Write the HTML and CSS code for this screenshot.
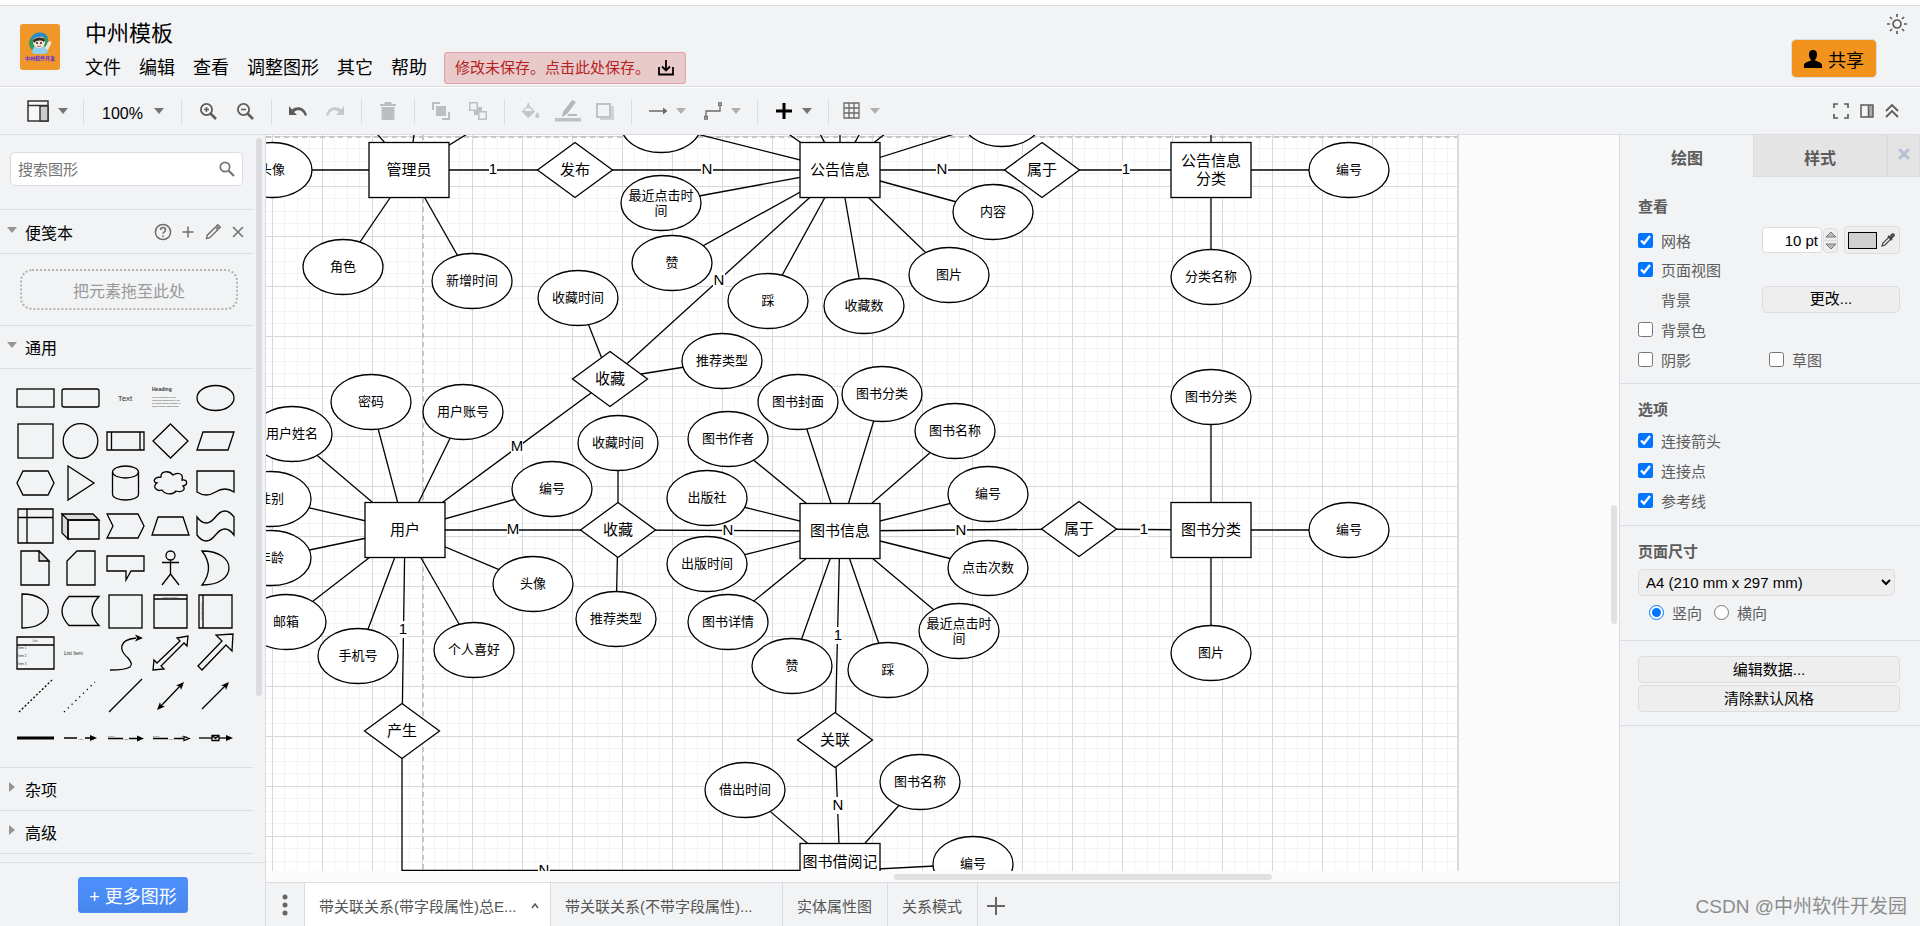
FILE: index.html
```html
<!DOCTYPE html>
<html lang="zh-CN">
<head>
<meta charset="utf-8">
<title>中州模板</title>
<link rel="stylesheet" href="styles.css">
</head>
<body>
<svg class="defs" width="0" height="0" aria-hidden="true">
  <symbol id="caret" viewBox="0 0 10 6"><path d="M0 0h10L5 6z" fill="currentColor"/></symbol>
</svg>

<header class="header">
  <svg class="logo" viewBox="0 0 40 46" role="img" aria-label="logo">
    <rect width="40" height="46" rx="3" fill="#f0972a"/>
    <circle cx="19" cy="19" r="10" fill="#2f9a63"/>
    <path d="M12 28c1-6 4-7 8-7s7 2 8 7l-3 2H14z" fill="#8fd0ee"/>
    <path d="M28 18c2-2 4-1 3 2l-3 6-3-2z" fill="#f7e3d2"/>
    <circle cx="19" cy="18" r="6" fill="#fbe6d6"/>
    <path d="M11 16c0-9 15-10 17-2-5-2-11-2-17 2z" fill="#2d8ac7"/>
    <path d="M13 17c1-4 10-5 12-1l-1 2c-3-2-7-2-10 1z" fill="#3a2a24"/>
    <circle cx="17" cy="19" r="1" fill="#222"/><circle cx="21" cy="19" r="1" fill="#222"/>
    <path d="M17 22q2 1 4 0" stroke="#a33" fill="none" stroke-width=".8"/>
    <text x="20" y="36" class="logo-text">中州软件开发</text>
  </svg>
  <div class="head-main">
    <h1 class="title">中州模板</h1>
    <nav class="menu">
      <button>文件</button><button>编辑</button><button>查看</button><button>调整图形</button><button>其它</button><button>帮助</button>
      <button class="status">修改未保存。点击此处保存。
        <svg width="16" height="16" viewBox="0 0 16 16" fill="none" stroke="#000" stroke-width="1.8"><path d="M1 7v7.500h14V7M8 0v10M4 6.500l4 4 4-4"/></svg>
      </button>
    </nav>
  </div>
  <div class="head-side">
    <button class="theme" aria-label="外观">
      <svg width="22" height="22" viewBox="0 0 22 22" fill="none" stroke="#5c5c5c" stroke-width="1.700"><circle cx="11" cy="11" r="4"/><path d="M11 1v3M11 18v3M1 11h3M18 11h3M4 4l2 2M16 16l2 2M4 18l2-2M16 6l2-2"/></svg>
    </button>
    <button class="share">
      <svg width="18" height="18" viewBox="0 0 18 18"><path d="M9 0c3 0 4 2 4 4.500 0 2-.8 4-1.800 5v1.300c3 1 6.800 1.700 6.800 4.700V18H0v-2.500c0-3 3.800-3.700 6.800-4.700V9.500C5.800 8.500 5 6.500 5 4.500 5 2 6 0 9 0z"/></svg>
      共享
    </button>
  </div>
</header>

<div class="toolbar">
  <button class="tb-view" aria-label="视图">
    <svg width="22" height="22" viewBox="0 0 22 22"><rect x="1" y="1" width="20" height="20" fill="#f7f7f7" stroke="#333" stroke-width="1.500"/><path d="M13 6h8v15h-8z" fill="#ccc" stroke="#333" stroke-width="1.500"/><path d="M1 5.500h20" stroke="#333" stroke-width="1.500"/></svg>
    <svg class="caret"><use href="#caret"/></svg>
  </button>
  <span class="sep"></span>
  <button class="tb-zoom">100%<svg class="caret"><use href="#caret"/></svg></button>
  <span class="sep"></span>
  <button class="tb" aria-label="放大"><svg viewBox="0 0 18 18" fill="none" stroke="#5c5c5c" stroke-width="1.800"><circle cx="7.500" cy="7.500" r="5.600"/><path d="M11.500 11.500l5.500 5.500" stroke-width="2.500"/><path d="M7.500 5v5M5 7.500h5" stroke-width="1.500"/></svg></button>
  <button class="tb" aria-label="缩小"><svg viewBox="0 0 18 18" fill="none" stroke="#5c5c5c" stroke-width="1.800"><circle cx="7.500" cy="7.500" r="5.600"/><path d="M11.500 11.500l5.500 5.500" stroke-width="2.500"/><path d="M5 7.500h5" stroke-width="1.500"/></svg></button>
  <span class="sep"></span>
  <button class="tb" aria-label="撤销"><svg viewBox="0 0 18 18"><path d="M0 4v9h8L5 10c4-3.500 9-2 11 4l2-1C16 5 8 3 3 7.500z" fill="#5c5c5c"/></svg></button>
  <button class="tb" aria-label="重做"><svg viewBox="0 0 18 18"><path d="M18 4v9h-8l3-3C9 6.500 4 8 2 14l-2-1C2 5 10 3 15 7.500z" fill="#c6c8c9"/></svg></button>
  <span class="sep"></span>
  <button class="tb" aria-label="删除"><svg viewBox="0 0 18 18" fill="#bcbebf"><path d="M1 2h4l1-2h6l1 2h4v2H1zM2.500 5h13v11.500q0 1.500-1.500 1.500H4q-1.500 0-1.500-1.500z"/></svg></button>
  <span class="sep"></span>
  <button class="tb" aria-label="置于前面"><svg viewBox="0 0 18 18" fill="#bcbebf"><path d="M4 4h10v10H4z"/><path d="M0 0h8v2H2v6H0zM18 18h-8v-2h6v-6h2z"/></svg></button>
  <button class="tb" aria-label="置于后面"><svg viewBox="0 0 18 18" fill="#bcbebf"><path d="M5 5h8v8H5z"/><path d="M.750.750h7.500v7.500H.750zM9.750 9.750h7.500v7.500h-7.500z" fill="#f1f3f4" stroke="#bcbebf" stroke-width="1.500"/></svg></button>
  <span class="sep"></span>
  <button class="tb" aria-label="填充颜色"><svg viewBox="0 0 20 18"><path d="M7 3l6.500 6.500L7 16 .500 9.500z" fill="none" stroke="#c3c5c6" stroke-width="1.500"/><path d="M1 9h12.500L7 16zM6 0h2v6H6zM17 10q3 4 2 6-2 2-4 0-1-2 2-6z" fill="#c3c5c6"/></svg></button>
  <button class="tb" aria-label="线条颜色"><svg class="wide" viewBox="0 0 26 22"><path d="M7 17l1-5L17 0l4 2-9 12zM14 14h8v2h-10z" fill="#b4b6b7"/><path d="M0 18h26v3.500H0z" fill="#bfc1c2"/></svg></button>
  <button class="tb" aria-label="阴影"><svg viewBox="0 0 18 18"><path d="M4 4h14v14H4z" fill="#d0d2d3"/><rect x="1" y="2" width="13" height="13" fill="#f1f3f4" stroke="#bfc1c2" stroke-width="2"/></svg></button>
  <span class="sep"></span>
  <button class="split dim" aria-label="连接"><svg viewBox="0 0 18 18"><path d="M0 8.300h14V5.500l4.500 3.500-4.500 3.500V9.700H0z" fill="#6b6b6b"/></svg><svg class="caret"><use href="#caret"/></svg></button>
  <button class="split dim" aria-label="航点"><svg viewBox="0 0 18 18" fill="none" stroke="#6b6b6b" stroke-width="1.300"><path d="M2 14V9h14V4M.700 14.500h2.600v2.600H.700zM14.700.800h2.600v2.600h-2.600z"/></svg><svg class="caret"><use href="#caret"/></svg></button>
  <span class="sep"></span>
  <button class="split" aria-label="插入"><svg viewBox="0 0 18 18"><path d="M7.500 1h3v6.500H17v3h-6.500V17h-3v-6.500H1v-3h6.500z"/></svg><svg class="caret"><use href="#caret"/></svg></button>
  <span class="sep"></span>
  <button class="split dim grid-btn" aria-label="表格"><svg viewBox="0 0 18 18" fill="none" stroke="#6b6b6b" stroke-width="1.300"><path d="M1 1h15v15H1zM6 1v15M11 1v15M1 6h15M1 11h15"/></svg><svg class="caret"><use href="#caret"/></svg></button>
  <div class="tb-right">
    <button aria-label="全屏"><svg width="16" height="16" viewBox="0 0 16 16" fill="none" stroke="#5c5c5c" stroke-width="1.700"><path d="M1 5V1h4M11 1h4v4M15 11v4h-4M5 15H1v-4"/></svg></button>
    <button aria-label="格式"><svg width="14" height="14" viewBox="0 0 14 14"><path d="M8.500 1h4.500v12H8.500z" fill="#aaa"/><path d="M1 1h12v12H1zM8.500 1v12" fill="none" stroke="#5c5c5c" stroke-width="1.500"/></svg></button>
    <button aria-label="折叠"><svg width="14" height="14" viewBox="0 0 14 14" fill="none" stroke="#5c5c5c" stroke-width="1.800"><path d="M1 7l6-6 6 6M1 13l6-6 6 6"/></svg></button>
  </div>
</div>

<div class="work">
  <aside class="side">
    <div class="side-scroll">
      <div class="side-body">
        <div class="search">
          <input type="text" placeholder="搜索图形" aria-label="搜索图形">
          <svg width="16" height="16" viewBox="0 0 16 16" fill="none" stroke="#757575" stroke-width="1.700"><circle cx="6" cy="6" r="4.700"/><path d="M9.500 9.500l5.500 5.500" stroke-width="2.200"/></svg>
        </div>
        <div class="sec-head tall">
          <svg class="caret"><use href="#caret"/></svg><span>便笺本</span>
          <div class="sec-tools">
            <button aria-label="帮助"><svg viewBox="0 0 18 18" fill="none" stroke="#6f6f6f" stroke-width="1.500"><circle cx="9" cy="9" r="7.600"/><path d="M6.500 7q0-2.500 2.500-2.500T11.500 7c0 1.800-2.500 1.800-2.500 3.800M9 12.200V14"/></svg></button>
            <button aria-label="添加"><svg viewBox="0 0 18 18" fill="none" stroke="#6f6f6f" stroke-width="1.500"><path d="M9 3.500v11M3.500 9h11"/></svg></button>
            <button aria-label="编辑"><svg viewBox="0 0 18 18" fill="none" stroke="#6f6f6f" stroke-width="1.400"><path d="M2.500 15.500l.8-3.300 8-8 2.500 2.500-8 8zM12.500 3l1.300-1.300 2.500 2.500L15 5.500z"/></svg></button>
            <button aria-label="关闭"><svg viewBox="0 0 18 18" fill="none" stroke="#6f6f6f" stroke-width="1.500"><path d="M4 4l10 10M14 4L4 14"/></svg></button>
          </div>
        </div>
        <div class="scratch"><div class="drop">把元素拖至此处</div></div>
        <div class="sec-head"><svg class="caret"><use href="#caret"/></svg><span>通用</span></div>
        <div class="shapes">
          <svg viewBox="0 0 45 42"><rect x="4" y="12" width="37" height="18"/></svg>
          <svg viewBox="0 0 45 42"><rect x="4" y="12" width="37" height="18" rx="2"/></svg>
          <svg viewBox="0 0 45 42"><text x="22" y="24" class="t8 mid">Text</text></svg>
          <svg viewBox="0 0 45 42"><text x="4" y="14" class="t5">Heading</text><text x="4" y="21" class="t2">Lorem ipsum dolor sit amet,</text><text x="4" y="24" class="t2">consectetur adipisicing elit, sed</text><text x="4" y="27" class="t2">do eiusmod tempor incididunt ut</text><text x="4" y="30" class="t2">labore et dolore magna aliqua.</text></svg>
          <svg viewBox="0 0 45 42"><ellipse cx="22.500" cy="21" rx="18.500" ry="12.500"/></svg>

          <svg viewBox="0 0 45 42"><rect x="5" y="4" width="35" height="34"/></svg>
          <svg viewBox="0 0 45 42"><circle cx="22.500" cy="21" r="17.300"/></svg>
          <svg viewBox="0 0 45 42"><path d="M4 12h37v18H4zM8.500 12v18M37 12v18"/></svg>
          <svg viewBox="0 0 45 42"><path d="M22.500 4L40 21 22.500 38 5 21z"/></svg>
          <svg viewBox="0 0 45 42"><path d="M10 12h31l-6 18H4z"/></svg>

          <svg viewBox="0 0 45 42"><path d="M10 9h25l6 12-6 12H10L4 21z"/></svg>
          <svg viewBox="0 0 45 42"><path d="M10 4l26 17-26 17z"/></svg>
          <svg viewBox="0 0 45 42"><ellipse cx="22.500" cy="10" rx="13" ry="6"/><path d="M9.500 10v22c0 8 26 8 26 0V10"/></svg>
          <svg viewBox="0 0 45 42"><path d="M13 15c-7 0-9 5-4 6-5 3-1 9 5 7 3 5 11 5 14 1 7 2 10-2 7-5 5-1 5-7-1-6 2-7-5-8-9-5-4-5-13-4-12 2z"/></svg>
          <svg viewBox="0 0 45 42"><path d="M4 9h37v21q-9-6-18.500 0T4 30z"/></svg>

          <svg viewBox="0 0 45 42"><path d="M5 4h35v34H5zM14 4v34M5 12.500h35"/></svg>
          <svg viewBox="0 0 45 42"><path d="M4 9h31l6 6H10zM4 9v19l6 6V15z" fill="#d8dadb"/><path d="M10 15h31v19H10z"/></svg>
          <svg viewBox="0 0 45 42"><path d="M4 9h31l6 12-6 12H4l6-12z"/></svg>
          <svg viewBox="0 0 45 42"><path d="M10 12h25l6 18H4z"/></svg>
          <svg viewBox="0 0 45 42"><path d="M4 12q9 12 18.500 0T41 12v18q-9-12-18.500 0T4 30z"/></svg>

          <svg viewBox="0 0 45 42"><path d="M8 4h18l10 10v24H8z"/><path d="M26 4v10h10z" fill="#d8dadb"/></svg>
          <svg viewBox="0 0 45 42"><path d="M19 4h18v34H9V14z"/></svg>
          <svg viewBox="0 0 45 42"><path d="M4 9h37v15H28l-5 9v-9H4z"/></svg>
          <svg viewBox="0 0 45 42"><circle cx="22.500" cy="8.500" r="4.500"/><path d="M22.500 13v14M14 15.500h17M22.500 27L14 38M22.500 27L31 38"/></svg>
          <svg viewBox="0 0 45 42"><path d="M9 4c36 0 36 34 0 34q13-17 0-34z"/></svg>

          <svg viewBox="0 0 45 42"><path d="M9 4c35 0 35 34 0 34z"/></svg>
          <svg viewBox="0 0 45 42"><path d="M11 6.500h30q-14 14.500 0 29H11q-14-14.500 0-29z"/></svg>
          <svg viewBox="0 0 45 42"><rect x="6" y="5" width="33" height="33"/></svg>
          <svg viewBox="0 0 45 42"><path d="M6 5h33v33H6zM6 9h33"/><text x="22" y="8" class="t2 mid">Vertical Container</text></svg>
          <svg viewBox="0 0 45 42"><path d="M6 5h33v33H6zM10 5v33"/><text x="-21" y="9" class="t2 mid" transform="rotate(-90)">Horizontal Container</text></svg>

          <svg viewBox="0 0 45 42"><path d="M4 5h37v32H4zM4 13h37"/><text x="22" y="10" class="t3 mid">List</text><text x="5" y="17" class="t3">Item 1</text><text x="5" y="25" class="t3">Item 2</text><text x="5" y="33" class="t3">Item 3</text></svg>
          <svg viewBox="0 0 45 42"><text x="6" y="23" class="t5 plain">List Item</text></svg>
          <svg viewBox="0 0 45 42"><path d="M7 38c22 0 25-4 18-12-9-8-10-18 8-20"/><path d="M32 2.500l8 3.500-8 3.500 2-3.500z" class="solid"/></svg>
          <svg viewBox="0 0 45 42"><path d="M5 38l1-10 3 3L32 9l-3-3 11-2-1 10-3-3L13 34l3 3z"/></svg>
          <svg viewBox="0 0 45 42"><path d="M5 34l24-25-6-6 17-1-1 17-6-6L9 38z"/></svg>

          <svg viewBox="0 0 45 42"><path d="M6 37L39 5" stroke-dasharray="2 2"/></svg>
          <svg viewBox="0 0 45 42"><path d="M6 37L37 7" stroke-dasharray="1.300 4"/></svg>
          <svg viewBox="0 0 45 42"><path d="M6 37L39 4"/></svg>
          <svg viewBox="0 0 45 42"><path d="M12 32L33 10"/><path d="M36 7l-3 8-1-3.500-4-1zM9 35l3-8 1 3.500 4 1z" class="solid"/></svg>
          <svg viewBox="0 0 45 42"><path d="M9 34L33 10"/><path d="M36 7l-3 8-1-3.500-4-1z" class="solid"/></svg>

          <svg viewBox="0 0 45 42"><path d="M4 21h37" stroke-width="3"/></svg>
          <svg viewBox="0 0 45 42"><path d="M6 21h13M27 21h8"/><path d="M32 18l7 3-7 3z" class="solid"/><text x="23" y="23" class="t2 mid">Label</text></svg>
          <svg viewBox="0 0 45 42"><path d="M5 21.500h15M26 21.500h8"/><path d="M34 18.500l7 3-7 3z" class="solid"/><text x="5" y="20" class="t2">Source</text><text x="23" y="23" class="t2 mid">Label</text></svg>
          <svg viewBox="0 0 45 42"><path d="M5 21.500h15M26 21.500h10"/><path d="M36 19.500l5 2-5 2z"/><text x="5" y="20" class="t2">Source</text><text x="23" y="23" class="t2 mid">Label</text><text x="33" y="20" class="t2">Target</text></svg>
          <svg viewBox="0 0 45 42"><path d="M6 21h30"/><path d="M33 18l7 3-7 3z" class="solid"/><path d="M19 18.500h7v5h-7zM19 18.500l3.500 3 3.500-3" fill="#f1f3f4"/></svg>
        </div>
        <div class="sec-head shut"><svg class="caret"><use href="#caret"/></svg><span>杂项</span></div>
        <div class="sec-head shut"><svg class="caret"><use href="#caret"/></svg><span>高级</span></div>
      </div>
      <div class="side-bar"><div class="thumb"></div></div>
    </div>
    <div class="side-foot"><button class="more">+ 更多图形</button></div>
  </aside>

  <main class="center">
    <div class="canvas-row">
      <svg class="canvas" id="canvas" role="img" aria-label="ER 图"></svg>
      <div class="vbar"><div class="thumb"></div></div>
    </div>
    <div class="hbar"><div class="thumb"></div></div>
    <div class="pages">
      <button class="dots" aria-label="页面"><svg width="6" height="22" viewBox="0 0 6 22" fill="#666"><circle cx="3" cy="3" r="2.500"/><circle cx="3" cy="11" r="2.500"/><circle cx="3" cy="19" r="2.500"/></svg></button>
      <button class="page on">带关联关系(带字段属性)总E...<svg width="8" height="6" viewBox="0 0 8 6" fill="none" stroke="#555" stroke-width="1.500"><path d="M1 5l3-4 3 4"/></svg></button>
      <button class="page second">带关联关系(不带字段属性)...</button>
      <button class="page">实体属性图</button>
      <button class="page">关系模式</button>
      <button class="add" aria-label="插入页面"><svg width="18" height="18" viewBox="0 0 18 18" stroke="#666" stroke-width="2"><path d="M9 0v18M0 9h18"/></svg></button>
    </div>
  </main>

  <aside class="format">
    <div class="tabs">
      <button class="tab on">绘图</button><button class="tab">样式</button>
      <button class="tab-x" aria-label="关闭"><svg width="12" height="12" viewBox="0 0 12 12" stroke="#b3c3d4" stroke-width="3"><path d="M1 1l10 10M11 1L1 11"/></svg></button>
    </div>
    <section class="panel view">
      <h2>查看</h2>
      <div class="line grid-line">
        <label><input type="checkbox" checked>网格</label>
        <div class="ctl">
          <input class="num" type="text" value="10 pt" aria-label="网格大小">
          <div class="spin">
            <button aria-label="增加"><svg width="12" height="7" viewBox="0 0 12 7"><path d="M1 6h10L6 1z" fill="#bbb" stroke="#777"/></svg></button>
            <button aria-label="减少"><svg width="12" height="7" viewBox="0 0 12 7"><path d="M1 1h10L6 6z" fill="#bbb" stroke="#777"/></svg></button>
          </div>
          <button class="color" aria-label="网格颜色"><span class="swatch"></span><svg width="14" height="14" viewBox="0 0 14 14" fill="none" stroke="#444" stroke-width="1.200"><path d="M1 13l1-3 6-6 2 2-6 6z"/><path d="M7 3l4 4M8.500 4.500L11 1.500q2-1 2 1L10 5.500" stroke-width="1.800"/></svg></button>
        </div>
      </div>
      <div class="line"><label><input type="checkbox" checked>页面视图</label></div>
      <div class="line"><span class="indent">背景</span><button class="btn change">更改...</button></div>
      <div class="line"><label><input type="checkbox">背景色</label></div>
      <div class="line pair"><label><input type="checkbox">阴影</label><label><input type="checkbox">草图</label></div>
    </section>
    <section class="panel options">
      <h2>选项</h2>
      <div class="line"><label><input type="checkbox" checked>连接箭头</label></div>
      <div class="line"><label><input type="checkbox" checked>连接点</label></div>
      <div class="line"><label><input type="checkbox" checked>参考线</label></div>
    </section>
    <section class="panel paper">
      <h2>页面尺寸</h2>
      <select aria-label="页面尺寸"><option>A4 (210 mm x 297 mm)</option></select>
      <div class="radios"><label><input type="radio" name="o" checked>竖向</label><label><input type="radio" name="o">横向</label></div>
    </section>
    <section class="panel acts">
      <button class="btn">编辑数据...</button>
      <button class="btn">清除默认风格</button>
    </section>
  </aside>
</div>
<div class="mark">CSDN @中州软件开发园</div>
<script src="diagram.js"></script>
</body>
</html>
```
FILE: styles.css
```css
* { box-sizing: border-box; }
body {
  margin: 0; height: 100vh; overflow: hidden; display: flex; flex-direction: column;
  background: #f1f3f4; color: #000; font-size: 15px; border-top: 5px solid #fff;
  font-family: "Liberation Sans", "Noto Sans CJK SC", sans-serif;
}
button { border: 0; background: none; padding: 0; margin: 0; font: inherit; color: inherit; }
svg { display: block; flex: none; }
.defs { position: absolute; }
.caret { width: 10px; height: 6px; color: #757575; }

.header {
  flex: none; height: 82px; padding-left: 20px; border-top: 1px solid #dadce0;
  border-bottom: 1px solid #dadce0; display: flex;
}
.logo { width: 40px; height: 46px; margin-top: 18px; }
.logo-text { font-size: 5px; font-weight: 700; fill: #5a2be0; text-anchor: middle; }
.head-main { margin-left: 25px; display: flex; flex-direction: column; padding-top: 12px; }
.title { margin: 0; font-size: 22px; line-height: 32px; font-weight: 400; }
.menu { display: flex; align-items: center; gap: 18px; font-size: 18px; height: 36px; }
.menu button { line-height: 26px; white-space: nowrap; }
.menu .status {
  display: flex; align-items: center; gap: 8px; height: 32px; padding: 0 11px 0 10px; margin-left: -1px;
  background: #e9cacb; border: 1px solid #dfa0a4; border-radius: 3px; color: #b3221f; font-size: 15px;
}
.head-side { margin-left: auto; display: flex; flex-direction: column; padding: 7px 12px 0 0; width: 129px; }
.theme { align-self: flex-end; height: 22px; }
.share {
  display: flex; align-items: center; justify-content: center; gap: 6px; width: 86px; height: 39px; margin-top: 4px;
  background: #f2931e; border: 1px solid #dadce0; border-radius: 5px; font-size: 18px;
}

.toolbar {
  flex: none; height: 48px; border-top: 1px solid #fff; border-bottom: 1px solid #dadce0;
  display: flex; align-items: center; padding-left: 27px; padding-right: 21px;
}
.tb-view, .tb-zoom { display: flex; align-items: center; gap: 9px; }
.tb-view { margin-right: 8px; }
.tb-zoom { margin: 0 10px; font-size: 16px; gap: 11px; padding-top: 5px; }
.tb-zoom .caret { margin-bottom: 5px; }
.sep { width: 1px; height: 25px; background: #dadce0; margin: 0 8px 0 7px; flex: none; }
.tb { width: 37px; height: 30px; display: grid; place-items: center; }
.tb svg { width: 18px; height: 18px; }
.tb .wide { width: 26px; height: 22px; }
.split { width: 55px; height: 30px; padding-left: 9px; display: flex; align-items: center; gap: 9px; }
.split > svg:first-child { width: 18px; height: 18px; }
.split.dim .caret { color: #b0b0b0; }
.split.grid-btn { padding-left: 6px; }
.tb-right { margin-left: auto; display: flex; align-items: center; gap: 11px; }

.work { flex: 1; min-height: 0; display: flex; }
.side { width: 266px; flex: none; border-right: 1px solid #dadce0; display: flex; flex-direction: column; }
.side-scroll { flex: 1; min-height: 0; display: flex; overflow: hidden; }
.side-body { width: 253px; flex: none; }
.side-bar { padding: 3px 0 0 3px; }
.thumb { background: #dadce0; border-radius: 4px; }
.side-bar .thumb { width: 6px; height: 558px; }
.search {
  margin: 17px 10px 23px; height: 34px; display: flex; align-items: center; padding: 0 7px;
  background: #fff; border: 1px solid #dadce0; border-radius: 5px;
}
.search input { flex: 1; min-width: 0; border: 0; outline: 0; padding: 0; font: inherit; background: none; }
.search input::placeholder { color: #757575; }
.sec-head {
  height: 43px; display: flex; align-items: center; gap: 8px; padding-left: 7px; font-size: 16px;
  border-top: 1px solid #dadce0;
}
.sec-head .caret { color: #959595; }
.sec-head > .caret { margin-bottom: 4px; }
.sec-head.tall { height: 44px; }
.shut .caret { transform: rotate(-90deg); }
.shut:last-child { border-bottom: 1px solid #dadce0; height: 44px; }
.sec-tools { margin-left: auto; display: flex; gap: 7px; padding-right: 6px; }
.sec-tools svg { width: 18px; height: 18px; }
.scratch { border-top: 1px solid #dadce0; padding: 15px 15px 15px 20px; }
.drop {
  height: 41px; border: 2px dotted #b5b5b5; border-radius: 12px; color: #999; font-size: 16px;
  display: grid; place-items: center;
}
.shapes {
  border-top: 1px solid #dadce0; height: 399px; padding: 8px 0 7px 13px; display: grid;
  grid-template-columns: repeat(5, 45px); grid-template-rows: repeat(9, 1fr);
}
.shapes svg { width: 45px; height: 42px; fill: none; stroke: #000; stroke-width: 1.3; }
.shapes text { stroke: none; fill: #333; }
.shapes .solid { fill: #000; stroke: none; }
.t8 { font-size: 8px; }
.t5 { font-size: 5px; font-weight: 700; }
.t5.plain { font-weight: 400; }
.t3 { font-size: 3px; }
.t2 { font-size: 2px; }
.mid { text-anchor: middle; }
.side-foot { flex: none; height: 64px; border-top: 1px solid #dadce0; padding: 14px 0 0 78px; }
.more {
  width: 110px; height: 36px; border-radius: 3px; color: #fff; font-size: 18px;
  background: linear-gradient(#4d90fe, #4787ed); border: 1px solid #4a8cf5;
}

.center { flex: 1; min-width: 0; display: flex; flex-direction: column; background: #fbfbfb; }
.canvas-row { flex: 1; min-height: 0; display: flex; }
.canvas { flex: 1; min-width: 0; height: 100%; }
.vbar { width: 8px; margin-left: -8px; padding-top: 370px; }
.vbar .thumb { width: 6px; height: 119px; background: #e1e1e1; }
.hbar { height: 11px; padding: 3px 0 0 628px; flex: none; }
.hbar .thumb { width: 378px; height: 6px; background: #e1e1e1; }
.page-bg { fill: #fff; }
.page-edge { stroke: #dadce0; stroke-width: 2; }
.minor { stroke: #f3f3f3; }
.major { stroke: #d8d8d8; }
.break { stroke: #c6c6c6; stroke-width: 2; stroke-dasharray: 5 4; }
.edge { stroke: #000; stroke-width: 1.3; fill: none; }
.node { fill: #fff; stroke: #000; stroke-width: 1.3; }
.attr { font-size: 13px; text-anchor: middle; }
.ent { font-size: 15px; text-anchor: middle; }
.tag-bg { fill: #fff; }
.pages { flex: none; height: 44px; border-top: 1px solid #dadce0; background: #f1f3f4; display: flex; color: #555; }
.dots { width: 38px; display: grid; place-items: center; }
.page { border-left: 1px solid #dadce0; padding: 2px 15px 0 14px; display: flex; align-items: center; white-space: nowrap; }
.page.on { background: #fff; gap: 14px; width: 246px; }
.page.second { width: 232px; }
.add { border-left: 1px solid #dadce0; padding: 2px 9px 0; }

.format { width: 301px; flex: none; border-left: 1px solid #dadce0; color: #5c5c5c; }
.tabs { display: flex; height: 42px; font-size: 16px; }
.tab { flex: 1; background: #e4e4e4; border-left: 1px solid #dadce0; border-bottom: 1px solid #dadce0; font-weight: 700; padding-top: 2px; }
.tab.on { background: none; border-color: transparent; }
.tab-x { width: 34px; background: #e4e4e4; border: 1px solid #dadce0; border-top: 0; border-left-width: 2px; display: grid; place-items: center; padding-bottom: 4px; }
.panel { padding: 0 20px 0 18px; border-bottom: 1px solid #dadce0; }
.panel h2 { margin: 0; font-size: 15px; line-height: 22px; font-weight: 700; }
.panel label { display: flex; align-items: center; gap: 8px; }
.panel input[type=checkbox], .panel input[type=radio] { width: 15px; height: 15px; margin: 0; }
.line { display: flex; align-items: center; justify-content: space-between; height: 30px; }
.view { padding-top: 19px; padding-bottom: 9px; }
.view .grid-line { height: 28px; margin-top: 8px; }
.indent { padding-left: 23px; }
.ctl { display: flex; align-items: center; }
.num { width: 60px; height: 26px; border: 1px solid #dadce0; border-radius: 4px; text-align: right; font: inherit; padding: 0 3px; color: #000; }
.spin { width: 15px; height: 25px; border: 1px solid #dadce0; border-radius: 4px; margin: 0 6px 0 1px; display: flex; flex-direction: column; background: #eee; }
.spin button { flex: 1; display: grid; place-items: center; }
.spin button + button { border-top: 1px solid #dadce0; }
.color { width: 56px; height: 28px; display: flex; align-items: center; gap: 4px; padding: 0 3px; background: #eee; border: 1px solid #dadce0; border-radius: 4px; }
.swatch { width: 29px; height: 17px; background: #d0d0d0; border: 1px solid #000; }
.btn { height: 27px; background: #eee; border: 1px solid #dadce0; border-radius: 5px; color: #000; line-height: 22px; }
.change { width: 138px; }
.pair label { width: 132px; }
.options { padding-top: 15px; padding-bottom: 10px; }
.options h2 { margin-bottom: 4px; }
.paper { padding-top: 15px; height: 115px; }
.paper select { width: 257px; height: 27px; margin-top: 6px; background: #eee; border: 1px solid #dadce0; border-radius: 5px; font: inherit; color: #000; padding-left: 3px; display: block; }
.radios { display: flex; gap: 12px; padding: 6px 0 0 11px; }
.acts { padding-top: 15px; padding-bottom: 13px; display: flex; flex-direction: column; gap: 2px; }

.mark { position: absolute; right: 13px; bottom: 5px; font-size: 19px; line-height: 28px; color: #8a8c8e; }
```
FILE: diagram.js
```js
// Offset of the scrolled drawing inside the viewport.
const OX = 266, OY = 135;
const RIGHT = 1457, BOTTOM = 1000;

// [kind, cx, cy, label lines] : e = ellipse, r = entity, d = relation
const nodes = {
  a0: ['e', 272, 170, '头像'], adm: ['r', 409, 170, '管理员'], pub: ['d', 575, 170, '发布'],
  role: ['e', 343, 267, '角色'], at: ['e', 472, 281, '新增时间'],
  nClick: ['e', 661, 203, '最近点击时', '间'], nTop: ['e', 661, 125], nZan: ['e', 672, 263, '赞'],
  nCai: ['e', 768, 301, '踩'], nFav: ['e', 864, 306, '收藏数'], nPic: ['e', 949, 275, '图片'],
  nBody: ['e', 993, 212, '内容'], nTop2: ['e', 1002, 119], news: ['r', 840, 170, '公告信息'],
  bel1: ['d', 1042, 170, '属于'], cat: ['r', 1211, 170, '公告信息', '分类'],
  catNo: ['e', 1349, 170, '编号'], catName: ['e', 1211, 277, '分类名称'],
  fav1: ['d', 610, 379, '收藏'], f1t: ['e', 578, 298, '收藏时间'], f1k: ['e', 722, 361, '推荐类型'],
  user: ['r', 405, 530, '用户'], uPwd: ['e', 371, 402, '密码'], uAcc: ['e', 463, 412, '用户账号'],
  uName: ['e', 292, 434, '用户姓名'], uSex: ['e', 271, 499, '性别'], uAge: ['e', 271, 558, '年龄'],
  uMail: ['e', 286, 622, '邮箱'], uTel: ['e', 358, 656, '手机号'], uLike: ['e', 474, 650, '个人喜好'],
  uHead: ['e', 533, 584, '头像'], uNo: ['e', 552, 489, '编号'],
  fav2: ['d', 618, 530, '收藏'], f2t: ['e', 618, 443, '收藏时间'], f2k: ['e', 616, 619, '推荐类型'],
  book: ['r', 840, 531, '图书信息'], bAuthor: ['e', 728, 439, '图书作者'], bCover: ['e', 798, 402, '图书封面'],
  bCat: ['e', 882, 394, '图书分类'], bName: ['e', 955, 431, '图书名称'], bNo: ['e', 988, 494, '编号'],
  bHits: ['e', 988, 568, '点击次数'], bLast: ['e', 959, 631, '最近点击时', '间'], bCai: ['e', 888, 670, '踩'],
  bZan: ['e', 792, 666, '赞'], bInfo: ['e', 728, 622, '图书详情'], bPub: ['e', 707, 498, '出版社'],
  bTime: ['e', 707, 564, '出版时间'], bel2: ['d', 1079, 529, '属于'], bc: ['r', 1211, 530, '图书分类'],
  bcTop: ['e', 1211, 397, '图书分类'], bcNo: ['e', 1349, 530, '编号'], bcPic: ['e', 1211, 653, '图片'],
  make: ['d', 402, 731, '产生'], link: ['d', 835, 740, '关联'], loan: ['r', 840, 871, '图书借阅记', '录'],
  lOut: ['e', 745, 790, '借出时间'], lName: ['e', 920, 782, '图书名称'], lNo: ['e', 973, 864, '编号']
};

const edges = [
  'a0 adm', 'adm pub', 'adm role', 'adm at', 'pub news',
  'news nClick', 'news nTop', 'news nZan', 'news nCai', 'news nFav', 'news nPic', 'news nBody', 'news nTop2',
  'news bel1', 'bel1 cat', 'cat catNo', 'cat catName', 'news fav1', 'fav1 f1t', 'fav1 f1k', 'fav1 user',
  'user uPwd', 'user uAcc', 'user uName', 'user uSex', 'user uAge', 'user uMail', 'user uTel', 'user uLike',
  'user uHead', 'user uNo', 'user fav2', 'fav2 f2t', 'fav2 f2k', 'fav2 book',
  'book bAuthor', 'book bCover', 'book bCat', 'book bName', 'book bNo', 'book bHits', 'book bLast', 'book bCai',
  'book bZan', 'book bInfo', 'book bPub', 'book bTime', 'book bel2', 'bel2 bc', 'bc bcTop', 'bc bcNo', 'bc bcPic',
  'user make', 'book link', 'link loan', 'loan lOut', 'loan lName', 'loan lNo'
];

// Connectors that leave through the top of the viewport.
const rays = [
  [409, 170, 347, 100], [409, 170, 419, 100], [409, 170, 522, 100],
  [840, 170, 740, 100], [840, 170, 801, 100], [840, 170, 840, 100], [840, 170, 878, 100], [840, 170, 927, 100],
  [1211, 170, 1211, 100]
];

const tags = [
  ['1', 493, 169], ['N', 707, 169], ['N', 942, 169], ['1', 1126, 169], ['N', 719, 280], ['M', 517, 446],
  ['M', 513, 529], ['N', 728, 530], ['N', 961, 530], ['1', 1144, 529], ['1', 403, 629], ['1', 838, 635],
  ['N', 838, 805], ['N', 544, 870]
];

let s = `<rect class="page-bg" width="${RIGHT - OX}" height="${BOTTOM}"/><g transform="translate(${-OX} ${-OY})">`;
for (let i = 0, x = 272; x < RIGHT; i++, x = 272 + i * 12.5)
  if (i % 4) s += `<path class="minor" d="M${Math.floor(x) + .5} ${OY}V${BOTTOM}"/>`;
for (let i = 0, y = 136; y < BOTTOM; i++, y = 136 + i * 12.5)
  if (i % 4) s += `<path class="minor" d="M${OX} ${Math.floor(y) + .5}H${RIGHT}"/>`;
for (let x = 272; x < RIGHT; x += 50) s += `<path class="major" d="M${x + .5} ${OY}V${BOTTOM}"/>`;
for (let y = 136; y < BOTTOM; y += 50) s += `<path class="major" d="M${OX} ${y + .5}H${RIGHT}"/>`;
s += `<path class="page-edge" d="M${RIGHT + 1} ${OY}V${BOTTOM}"/>`;
s += `<path class="break" d="M${OX} 137H${RIGHT}M423 ${OY}V${BOTTOM}"/>`;

for (const [x1, y1, x2, y2] of rays) s += `<path class="edge" d="M${x1} ${y1}L${x2} ${y2}"/>`;
for (const e of edges) {
  const [a, b] = e.split(' ').map(k => nodes[k]);
  s += `<path class="edge" d="M${a[1]} ${a[2]}L${b[1]} ${b[2]}"/>`;
}
s += '<path class="edge" d="M402 731V870.500H840"/>';

for (const [t, x, y] of tags) {
  const w = t === '1' ? 8 : 12;
  s += `<rect class="tag-bg" x="${x - w / 2}" y="${y - 8}" width="${w}" height="17"/><text class="ent" x="${x}" y="${y + 5}">${t}</text>`;
}
for (const [k, x, y, ...lines] of Object.values(nodes)) {
  if (k === 'e') s += `<ellipse class="node" cx="${x}" cy="${y}" rx="40" ry="27.500"/>`;
  else if (k === 'r') s += `<rect class="node" x="${x - 40}" y="${y - 27.5}" width="80" height="55"/>`;
  else s += `<path class="node" d="M${x} ${y - 27.5}l37.500 27.500-37.500 27.500-37.500-27.500z"/>`;
  const small = k === 'e', lh = small ? 15 : 18;
  lines.forEach((t, i) => {
    const ty = y + (small ? 4 : 5) + (i - (lines.length - 1) / 2) * lh;
    s += `<text class="${small ? 'attr' : 'ent'}" x="${x}" y="${ty}">${t}</text>`;
  });
}
document.getElementById('canvas').innerHTML = s + '</g>';
```
